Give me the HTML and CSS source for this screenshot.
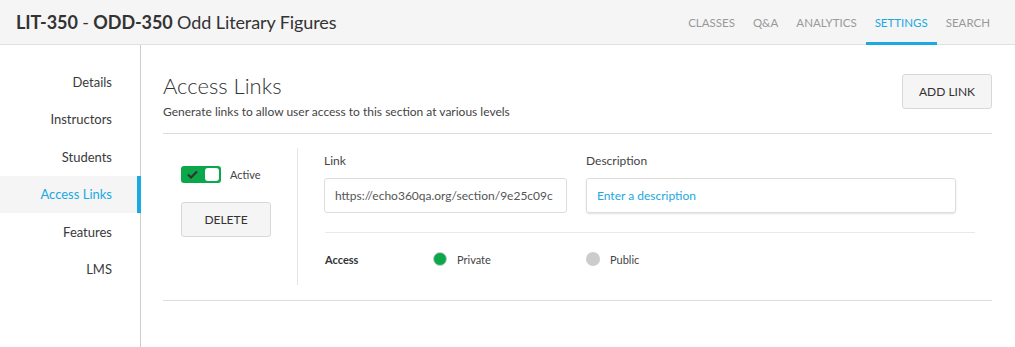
FILE: index.html
```html
<!DOCTYPE html>
<html lang="en">
	<head>
		<meta charset="UTF-8">
		<meta name="viewport" content="width=device-width,initial-scale=1">
		<title>Access Links</title>
		<link rel="stylesheet" href="styles.css">
	</head>
	<body>
		<header class="top-bar">
			<h1 class="course-title"><b>LIT-350</b> - <b>ODD-350</b> Odd Literary Figures</h1>
			<nav class="top-nav">
				<a class="top-nav__item">CLASSES</a>
				<a class="top-nav__item">Q&amp;A</a>
				<a class="top-nav__item">ANALYTICS</a>
				<a class="top-nav__item is-active">SETTINGS</a>
				<a class="top-nav__item">SEARCH</a>
			</nav>
		</header>
		<div class="page">
			<aside class="side-nav">
				<a class="side-nav__item">Details</a>
				<a class="side-nav__item">Instructors</a>
				<a class="side-nav__item">Students</a>
				<a class="side-nav__item is-active">Access Links</a>
				<a class="side-nav__item">Features</a>
				<a class="side-nav__item">LMS</a>
			</aside>
			<main class="content">
				<section class="content-head">
					<div>
						<h2 class="content-head__title">Access Links</h2>
						<p class="content-head__sub">Generate links to allow user access to this section at various levels</p>
					</div>
					<button class="btn btn--add">ADD LINK</button>
				</section>
				<section class="link-row">
					<div class="link-row__left">
						<div class="toggle-wrap">
							<span class="toggle">
								<svg class="toggle__check" width="11" height="9" viewBox="0 0 11 9"><path d="M1 4.5 L4 7.5 L10 1.5" fill="none" stroke="#333" stroke-width="2.2"/></svg>
								<span class="toggle__knob"></span>
							</span>
							<span class="toggle-label">Active</span>
						</div>
						<button class="btn btn--delete">DELETE</button>
					</div>
					<div class="link-row__right">
						<div class="fields">
							<div class="field field--link">
								<label class="field__label">Link</label>
								<div class="field__input">https://echo360qa.org/section/9e25c09c</div>
							</div>
							<div class="field field--desc">
								<label class="field__label">Description</label>
								<div class="field__input field__input--placeholder">Enter a description</div>
							</div>
						</div>
						<div class="access">
							<span class="access__label">Access</span>
							<span class="radio is-checked"></span>
							<span class="radio-label radio-label--private">Private</span>
							<span class="radio"></span>
							<span class="radio-label">Public</span>
						</div>
					</div>
				</section>
			</main>
		</div>
	</body>
</html>
```

FILE: styles.css
```css
body
{
	margin: 0;
	font-family: Lato, "Open Sans", sans-serif;
	color: #333;
	background: #fff;
}

.top-bar
{
	height: 44px;
	background-color: #f5f5f5;
	border-bottom: 1px solid #e0e0e0;
	display: flex;
	align-items: center;
	justify-content: space-between;
	padding-left: 16px;
	padding-right: 16px;
}

.course-title
{
	margin: 0;
	font-size: 18px;
	font-weight: normal;
	color: #333;
	letter-spacing: -0.1px;
}

.course-title b
{
	font-weight: bold;
}

.top-nav
{
	display: flex;
	align-self: stretch;
}

.top-nav__item
{
	display: flex;
	align-items: center;
	padding: 0 9px;
	font-size: 11.5px;
	color: #999;
	border-bottom: 3px solid transparent;
	margin-bottom: -1px;
	padding-top: 2px;
}

.top-nav__item.is-active
{
	color: #1aa9e0;
	border-bottom-color: #1aa9e0;
}

.page
{
	display: flex;
	height: 302px;
}

.side-nav
{
	width: 141px;
	border-right: 1px solid #ccc;
	padding-top: 18px;
	box-sizing: border-box;
	flex-shrink: 0;
}

.side-nav__item
{
	display: flex;
	align-items: center;
	justify-content: flex-end;
	height: 37.5px;
	padding-right: 25px;
	font-size: 13px;
	color: #3a3a3a;
	border-right: 4px solid transparent;
	margin-right: -1px;
}

.side-nav__item.is-active
{
	background-color: #f5f5f5;
	color: #1aa9e0;
	border-right-color: #1aa9e0;
}

.content
{
	flex: 1;
	padding: 27px 23px 0 22px;
}

.content-head
{
	display: flex;
	justify-content: space-between;
	align-items: flex-start;
	border-bottom: 1px solid #ddd;
	padding-bottom: 14px;
}

.content-head__title
{
	margin: 0;
	font-size: 22px;
	font-weight: 300;
	line-height: 28px;
	color: #333;
}

.content-head__sub
{
	margin: 4px 0 0;
	font-size: 12px;
	color: #444;
}

.btn
{
	font-family: inherit;
	background-color: #f5f5f5;
	border: 1px solid #d8d8d8;
	border-radius: 3px;
	color: #333;
	font-size: 12px;
}

.btn--add
{
	width: 90px;
	height: 35px;
	margin-top: 2px;
}

.link-row
{
	display: flex;
	border-bottom: 1px solid #ddd;
	padding: 14px 0 15px;
}

.link-row__left
{
	width: 135px;
	border-right: 1px solid #e5e5e5;
	padding: 18px 0 0 18px;
	box-sizing: border-box;
}

.toggle-wrap
{
	display: flex;
	align-items: center;
}

.toggle
{
	width: 40px;
	height: 17px;
	border-radius: 3px;
	background-color: #0aa84a;
	display: flex;
	align-items: center;
	justify-content: space-between;
	padding: 0 2px 0 6px;
	box-sizing: border-box;
}

.toggle__knob
{
	width: 14px;
	height: 13px;
	background: #fff;
	border-radius: 3px;
}

.toggle-label
{
	font-size: 11px;
	margin-left: 9px;
	color: #444;
}

.btn--delete
{
	margin-top: 19px;
	width: 90px;
	height: 35px;
}

.link-row__right
{
	flex: 1;
	padding: 0 17px 0 27px;
}

.fields
{
	display: flex;
	gap: 19px;
	padding-top: 5px;
	padding-bottom: 19px;
	border-bottom: 1px solid #e8e8e8;
}

.field__label
{
	display: block;
	font-size: 12px;
	color: #444;
	margin-bottom: 10px;
}

.field--link
{
	margin-left: -1px;
}

.field__input
{
	height: 35px;
	border: 1px solid #ddd;
	border-radius: 3px;
	box-sizing: border-box;
	padding: 0 10px;
	display: flex;
	align-items: center;
	font-size: 12px;
	color: #555;
	white-space: nowrap;
	overflow: hidden;
}

.field--link .field__input
{
	width: 243px;
}

.field--desc .field__input
{
	width: 370px;
	box-shadow: 0 1px 2px rgba(0, 0, 0, 0.12);
}

.field__input--placeholder
{
	color: #1aa9e0;
}

.access
{
	display: flex;
	align-items: center;
	height: 52px;
	font-size: 11px;
}

.access__label
{
	font-weight: bold;
	width: 108px;
}

.radio
{
	width: 14px;
	height: 14px;
	border-radius: 50%;
	background-color: #ccc;
	box-sizing: border-box;
}

.radio.is-checked
{
	background-color: #0aa84a;
	border: 1.5px solid #ccc;
}

.radio-label
{
	margin-left: 10px;
	color: #444;
}

.radio-label--private
{
	width: 129px;
}
```
